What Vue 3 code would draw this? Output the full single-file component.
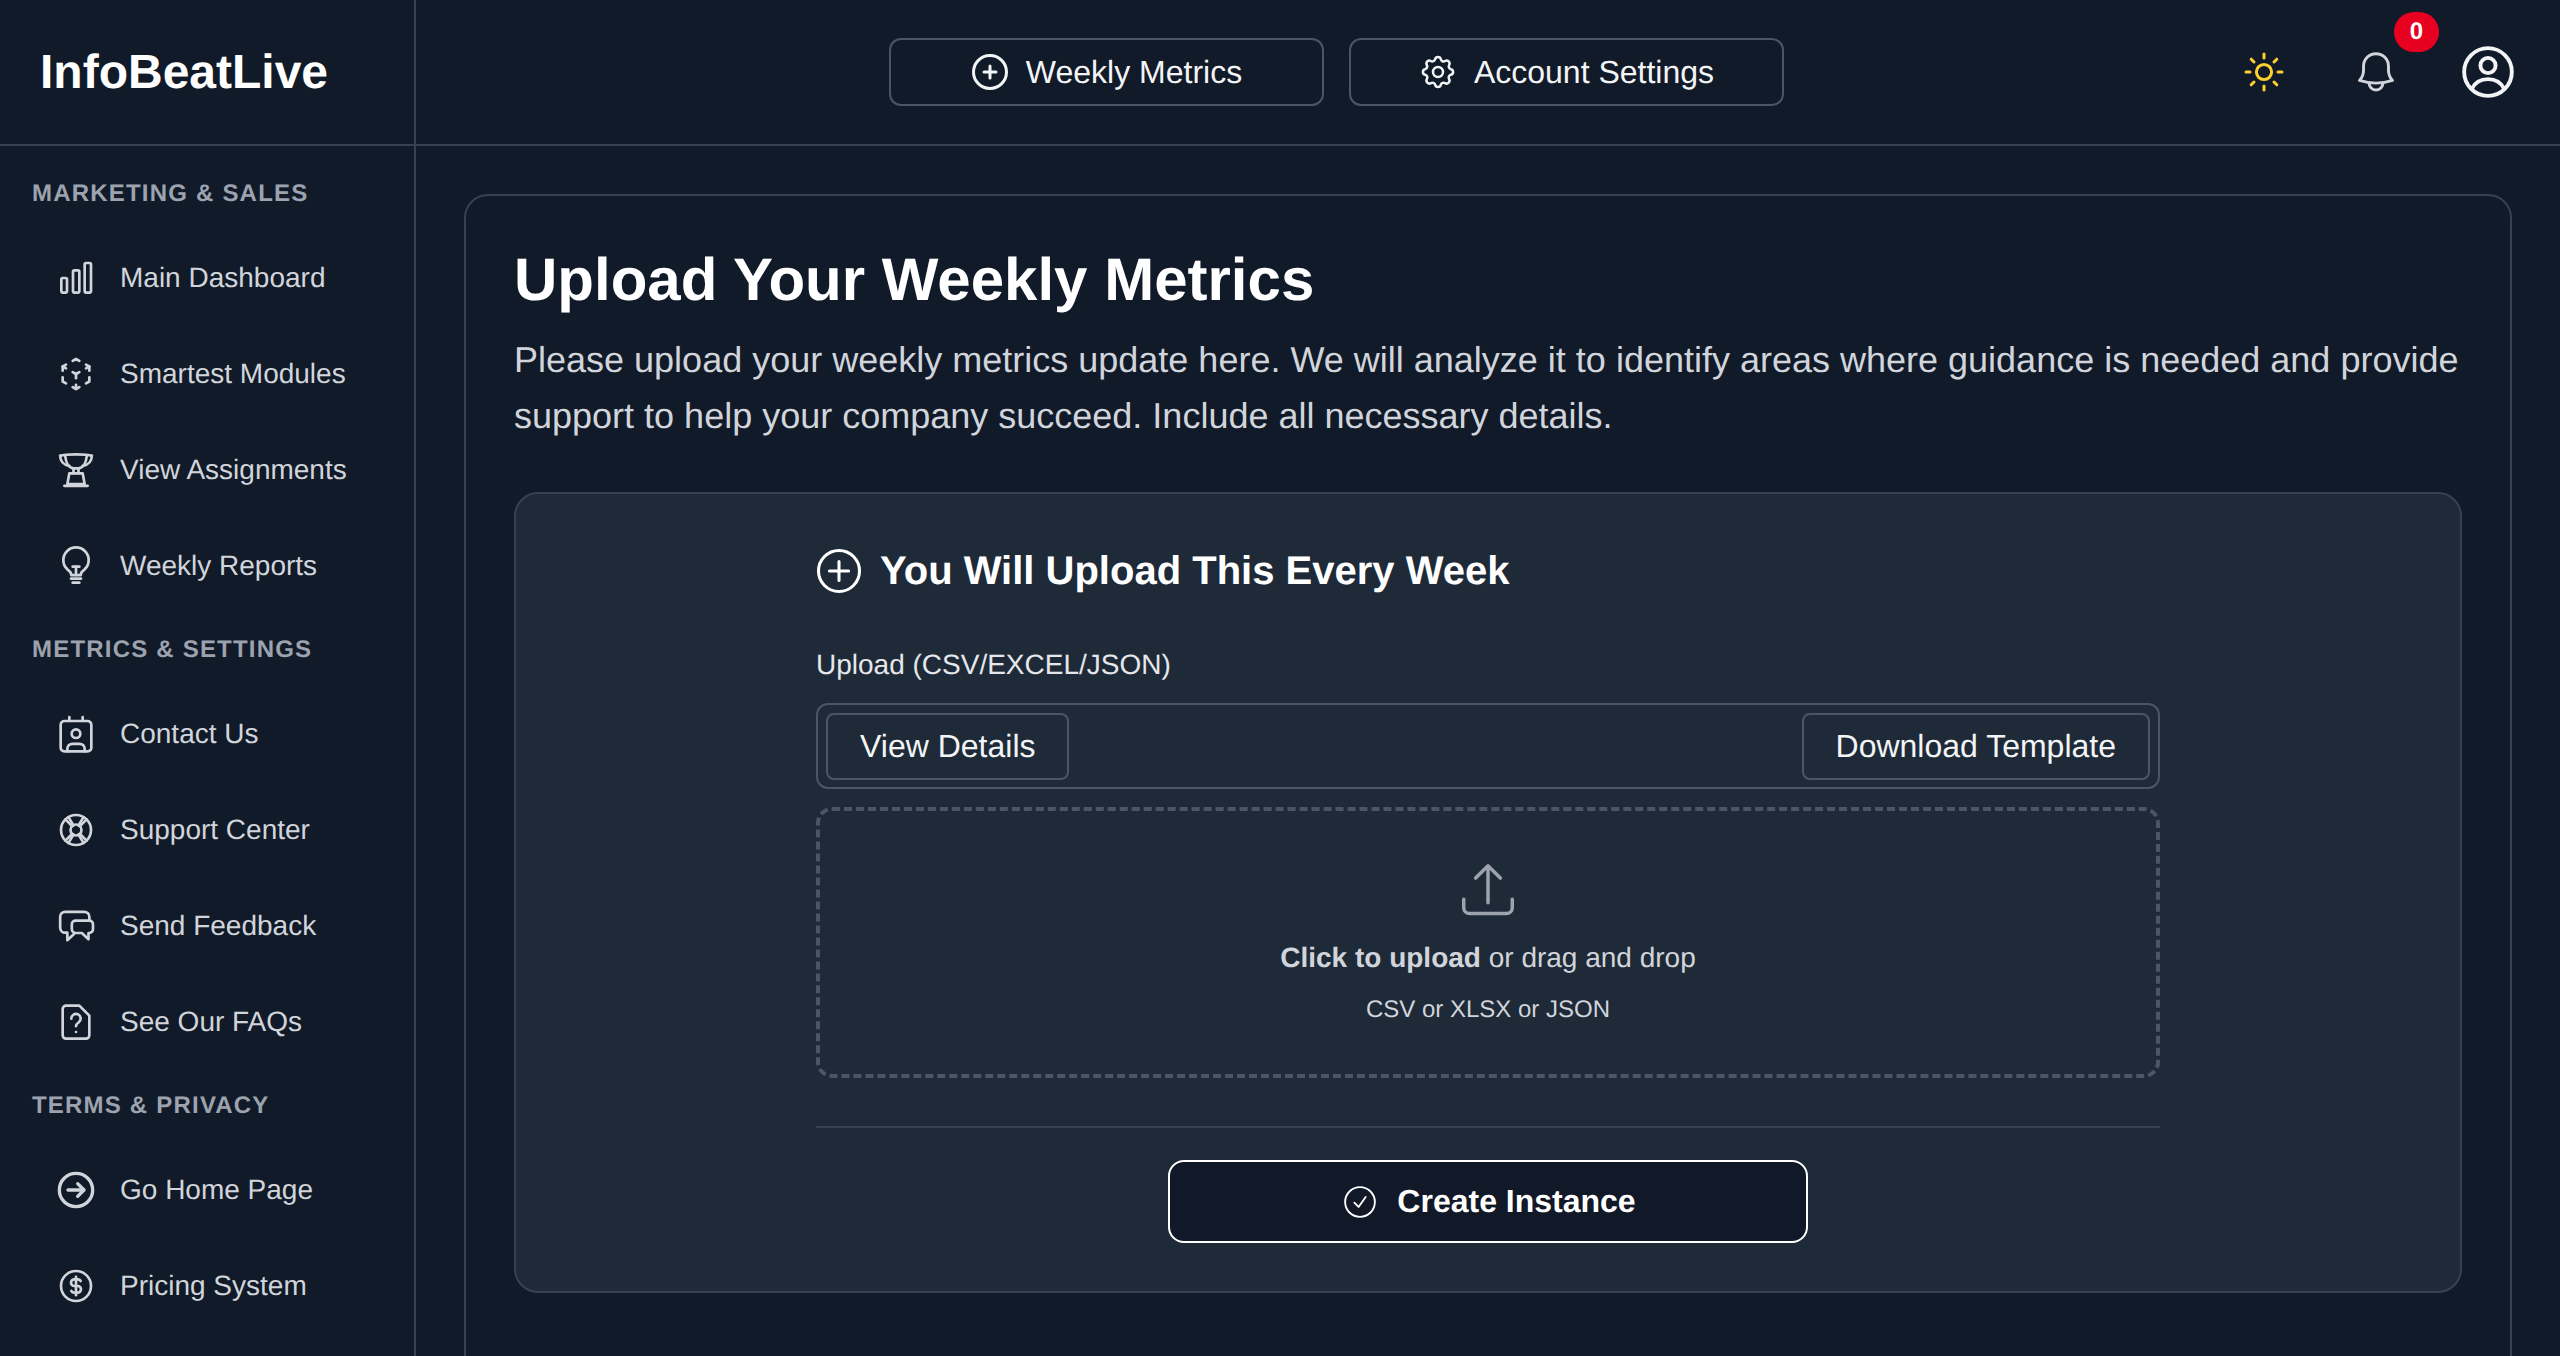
<script setup>
const navGroups = [
  {
    title: 'MARKETING & SALES',
    items: [
      { label: 'Main Dashboard', paths: ['M3.200 12.800a.8 .8 0 0 1 .8 -.8h1.800a.8 .8 0 0 1 .8 .8v7.200a.8 .8 0 0 1 -.8 .8h-1.800a.8 .8 0 0 1 -.8 -.8z', 'M10.200 8.200a.8 .8 0 0 1 .8 -.8h2.200a.8 .8 0 0 1 .8 .8v11.800a.8 .8 0 0 1 -.8 .8h-2.200a.8 .8 0 0 1 -.8 -.8z', 'M17.200 3.800a.8 .8 0 0 1 .8 -.8h2.200a.8 .8 0 0 1 .8 .8v16.200a.8 .8 0 0 1 -.8 .8h-2.200a.8 .8 0 0 1 -.8 -.8z'] },
      { label: 'Smartest Modules', paths: ['M6 17.600l-2 -1.100v-2.500', 'M4 10v-2.500l2 -1.100', 'M10 4.100l2 -1.100l2 1.100', 'M18 6.400l2 1.100v2.500', 'M20 14v2.500l-2 1.120', 'M14 19.900l-2 1.100l-2 -1.100', 'M12 12l2 -1.100', 'M18 8.600l2 -1.100', 'M12 12v2.500', 'M12 18.500v2.500', 'M12 12l-2 -1.100', 'M6 8.600l-2 -1.100'] },
      { label: 'View Assignments', paths: ['M2.500 3.500c3 -1.200 16 -1.200 19 0', 'M2.500 3.500c0 3 2 5.500 5.500 6', 'M21.500 3.500c0 3 -2 5.500 -5.500 6', 'M5.500 3.500c.5 4.500 2.500 7.300 5 7.500h3c2.500 -.2 4.500 -3 5 -7.500', 'M10.500 11v3', 'M13.500 11v3', 'M8 14h8l1.200 6.500h-10.400z', 'M5 21.500h14'] },
      { label: 'Weekly Reports', paths: ['M9.200 17.500c0 -1.500 -1 -2.500 -2.400 -3.500a7.600 7.600 0 1 1 10.400 0c-1.400 1 -2.400 2 -2.400 3.500z', 'M10 12.400h4', 'M12 12.400v5', 'M9 19.600h6', 'M10 22h4'] },
    ],
  },
  {
    title: 'METRICS & SETTINGS',
    items: [
      { label: 'Contact Us', paths: ['M5 4.200h14a2.200 2.200 0 0 1 2.200 2.200v13.800a2.200 2.200 0 0 1 -2.200 2.200h-14a2.200 2.200 0 0 1 -2.200 -2.200v-13.800a2.200 2.200 0 0 1 2.200 -2.200z', 'M8 1.800v2.400', 'M16 1.800v2.400', 'M12 9.200a2.600 2.600 0 1 1 0 5.200a2.600 2.600 0 0 1 0 -5.200z', 'M6.800 22.400v-1.500a3 3 0 0 1 3 -3h4.400a3 3 0 0 1 3 3v1.500'] },
      { label: 'Support Center', paths: ['M12 3a9 9 0 1 1 0 18a9 9 0 0 1 0 -18z', 'M12 8.700a3.300 3.300 0 1 1 0 6.600a3.300 3.300 0 0 1 0 -6.600z', 'M14.400 14.400l4 4', 'M9.600 14.400l-4 4', 'M5.600 5.600l4 4', 'M18.400 5.600l-4 4', 'M7.500 4.300l3 5', 'M16.500 4.300l-3 5', 'M7.500 19.700l3 -5', 'M16.500 19.700l-3 -5'] },
      { label: 'Send Feedback', paths: ['M20 8.500v-2a3 3 0 0 0 -3 -3h-11.500a3 3 0 0 0 -3 3v6.500a3 3 0 0 0 3 3h1.300v4.500l4 -3.700', 'M11.500 8.800h8.500a2.200 2.200 0 0 1 2.200 2.200v3a2.200 2.200 0 0 1 -2.200 2.200h-.5v3.800l-4 -3.800h-3.800a2.200 2.200 0 0 1 -2.200 -2.200v-3a2.200 2.200 0 0 1 2.200 -2.200z'] },
      { label: 'See Our FAQs', paths: ['M6 2.200h8l6 6v11.800a2 2 0 0 1 -2 2h-12a2 2 0 0 1 -2 -2v-15.800a2 2 0 0 1 2 -2z', 'M9.200 10a2.800 2.800 0 1 1 4.300 2.300c-.9 .6 -1.500 1.200 -1.500 2.200', 'M12 18v.01'] },
    ],
  },
  {
    title: 'TERMS & PRIVACY',
    items: [
      { label: 'Go Home Page', sw: 2, paths: ['M12 2a10 10 0 1 1 0 20a10 10 0 0 1 0 -20z', 'M7.200 12h9.400', 'M13 8.200l3.800 3.800l-3.800 3.800'] },
      { label: 'Pricing System', paths: ['M12 3a9 9 0 1 1 0 18a9 9 0 0 1 0 -18z', 'M14.800 9a2 2 0 0 0 -1.800 -1h-2a2 2 0 0 0 0 4h2a2 2 0 0 1 0 4h-2a2 2 0 0 1 -1.800 -1', 'M12 6.500v11'] },
    ],
  },
]

const sunRays = ['M12 3v2', 'M12 19v2', 'M3 12h2', 'M19 12h2', 'M5.600 5.600l1.400 1.400', 'M17 17l1.400 1.400', 'M5.600 18.400l1.400 -1.400', 'M17 7l1.400 -1.400']
</script>

<template>
  <div class="app">
    <aside class="sidebar">
      <div class="brand">InfoBeatLive</div>
      <nav class="nav">
        <template v-for="group in navGroups" :key="group.title">
          <div class="nav-title">{{ group.title }}</div>
          <a v-for="item in group.items" :key="item.label" class="nav-item">
            <svg class="nav-icon" viewBox="0 0 24 24" :stroke-width="item.sw || 1.6">
              <path v-for="(d, idx) in item.paths" :key="idx" :d="d" />
            </svg>
            <span>{{ item.label }}</span>
          </a>
        </template>
      </nav>
    </aside>

    <div class="content">
      <header class="topbar">
        <div class="top-actions">
          <button class="top-btn">
            <svg class="top-icon thick" viewBox="0 0 24 24">
              <circle cx="12" cy="12" r="9.900" />
              <path d="M12 8.400v7.200M8.400 12h7.200" />
            </svg>
            Weekly Metrics
          </button>
          <button class="top-btn">
            <svg class="top-icon" viewBox="0 0 24 24">
              <path d="M10.300 4.300c.4 -1.800 3 -1.800 3.400 0a1.700 1.700 0 0 0 2.600 1.100c1.500 -.9 3.300 .8 2.400 2.400a1.700 1.700 0 0 0 1 2.500c1.800 .4 1.800 3 0 3.400a1.700 1.700 0 0 0 -1 2.600c.9 1.500 -.9 3.300 -2.400 2.400a1.700 1.700 0 0 0 -2.600 1c-.4 1.800 -3 1.800 -3.400 0a1.700 1.700 0 0 0 -2.600 -1c-1.500 .9 -3.300 -.9 -2.400 -2.400a1.700 1.700 0 0 0 -1 -2.600c-1.800 -.4 -1.800 -3 0 -3.400a1.700 1.700 0 0 0 1 -2.500c-.9 -1.600 .9 -3.300 2.400 -2.400c1 .6 2.300 .1 2.600 -1.100z" />
              <circle cx="12" cy="12" r="3" />
            </svg>
            Account Settings
          </button>
        </div>
        <div class="top-right">
          <svg class="sun" viewBox="0 0 24 24">
            <circle cx="12" cy="12" r="3.800" />
            <path v-for="ray in sunRays" :key="ray" :d="ray" />
          </svg>
          <div class="bell-wrap">
            <svg class="bell" viewBox="0 0 24 24">
              <path d="M12 2a6.800 6.800 0 0 0 -6.800 6.800v2.200c0 2.500 -.7 4 -2.200 5.600c5.500 1.800 12.500 1.800 18 0c-1.500 -1.600 -2.200 -3.100 -2.200 -5.600v-2.200a6.800 6.800 0 0 0 -6.800 -6.800z" />
              <path d="M8.200 18a3.800 3.800 0 0 0 7.600 0" />
            </svg>
            <span class="badge">0</span>
          </div>
          <svg class="avatar" viewBox="0 0 24 24">
            <circle cx="12" cy="12" r="11" />
            <circle cx="12" cy="9" r="3.500" />
            <path d="M4.500 19.800c1.500 -3 4.500 -4.500 7.500 -4.500s6 1.500 7.500 4.500" />
          </svg>
        </div>
      </header>

      <main class="main">
        <section class="card">
          <h1 class="page-title">Upload Your Weekly Metrics</h1>
          <p class="page-desc">
            Please upload your weekly metrics update here. We will analyze it to identify areas where guidance is needed and provide support to help your company succeed. Include all necessary details.
          </p>

          <div class="panel">
            <div class="form">
              <h2 class="form-title">
                <svg class="form-icon" viewBox="0 0 24 24">
                  <circle cx="12" cy="12" r="10.700" />
                  <path d="M12 7v10M7 12h10" />
                </svg>
                You Will Upload This Every Week
              </h2>
              <div class="field-label">Upload (CSV/EXCEL/JSON)</div>
              <div class="toolbar">
                <button class="tool-btn">View Details</button>
                <button class="tool-btn">Download Template</button>
              </div>
              <div class="dropzone">
                <svg class="upload-icon" viewBox="0 0 24 24">
                  <path d="M12 17.500v-15.900M6.700 6.900l5.300 -5.300l5.300 5.300" />
                  <path d="M1.600 16v3.600a2.500 2.500 0 0 0 2.500 2.500h15.800a2.500 2.500 0 0 0 2.500 -2.500v-3.600" />
                </svg>
                <div class="drop-main"><strong>Click to upload</strong> or drag and drop</div>
                <div class="drop-sub">CSV or XLSX or JSON</div>
              </div>
              <div class="form-foot">
                <button class="submit-btn">
                  <svg class="submit-icon" viewBox="0 0 24 24">
                    <circle cx="12" cy="12" r="10.500" />
                    <path d="M8 12.500l3 3l5 -7" />
                  </svg>
                  Create Instance
                </button>
              </div>
            </div>
          </div>
        </section>
      </main>
    </div>
  </div>
</template>

<style>
html,
body {
  margin: 0;
  background: #111a28;
}
</style>

<style scoped>
.app {
  display: flex;
  height: 100vh;
  overflow: hidden;
  background: #111a28;
  font-family: "Liberation Sans", Arial, sans-serif;
  text-rendering: geometricPrecision;
  color: #f9fafb;
}

button {
  font-family: inherit;
  text-rendering: inherit;
  cursor: pointer;
}

svg {
  fill: none;
  stroke: currentColor;
  stroke-linecap: round;
  stroke-linejoin: round;
  flex-shrink: 0;
}

/* sidebar */
.sidebar {
  width: 414px;
  flex-shrink: 0;
  border-right: 2px solid #374151;
}

.brand {
  height: 144px;
  padding-left: 40px;
  display: flex;
  align-items: center;
  font-size: 48px;
  font-weight: 700;
  color: #fff;
  border-bottom: 2px solid #374151;
}

.nav {
  padding-top: 12px;
}

.nav-title {
  height: 72px;
  padding-left: 32px;
  display: flex;
  align-items: center;
  font-size: 24px;
  font-weight: 700;
  letter-spacing: 1.200px;
  color: #9ca3af;
}

.nav-item {
  height: 96px;
  padding-left: 56px;
  display: flex;
  align-items: center;
  gap: 24px;
  font-size: 28px;
  color: #d1d5db;
}

.nav-icon {
  width: 40px;
  height: 40px;
}

/* header */
.content {
  flex: 1;
  min-width: 0;
  display: flex;
  flex-direction: column;
}

.topbar {
  height: 144px;
  flex-shrink: 0;
  display: flex;
  align-items: center;
  border-bottom: 2px solid #374151;
}

.top-actions {
  flex: 1;
  display: flex;
  justify-content: center;
  gap: 25px;
}

.top-btn {
  width: 435px;
  height: 68px;
  display: flex;
  align-items: center;
  justify-content: center;
  gap: 16px;
  background: transparent;
  border: 2px solid #4b5563;
  border-radius: 12px;
  font-size: 32px;
  color: #f3f4f6;
}

.top-icon {
  width: 40px;
  height: 40px;
  stroke-width: 1.500;
}

.top-icon.thick {
  stroke-width: 1.800;
}

.top-right {
  width: 304px;
  box-sizing: border-box;
  display: flex;
  align-items: center;
}

.sun {
  width: 48px;
  height: 48px;
  margin-left: -16px;
  stroke-width: 1.500;
  color: #fbd130;
}

.bell-wrap {
  position: relative;
  margin-left: 66px;
  display: flex;
}

.bell {
  width: 44px;
  height: 44px;
  stroke-width: 1.600;
  color: #d1d5db;
}

.badge {
  position: absolute;
  left: 40px;
  top: -38px;
  width: 45px;
  height: 40px;
  border-radius: 20px;
  background: #e7001f;
  color: #fff;
  font-size: 24px;
  font-weight: 700;
  display: flex;
  align-items: center;
  justify-content: center;
}

.avatar {
  width: 52px;
  height: 52px;
  margin-left: 64px;
  stroke-width: 1.800;
  color: #f3f4f6;
}

/* main */
.main {
  flex: 1;
  min-height: 0;
  padding: 48px 48px 0;
}

.card {
  box-sizing: border-box;
  min-height: 1300px;
  padding: 48px;
  border: 2px solid #374151;
  border-radius: 24px;
}

.page-title {
  margin: 0;
  font-size: 60px;
  line-height: 72px;
  font-weight: 700;
  color: #fff;
}

.page-desc {
  margin: 16px 0 0;
  font-size: 36px;
  line-height: 56px;
  color: #d1d5db;
}

.panel {
  margin-top: 48px;
  padding: 54px 0 48px;
  display: flex;
  justify-content: center;
  background: #1e2a38;
  border: 2px solid #374151;
  border-radius: 24px;
}

.form {
  width: 1344px;
}

.form-title {
  margin: 0;
  display: flex;
  align-items: center;
  gap: 18px;
  font-size: 40px;
  line-height: 44px;
  font-weight: 700;
  color: #fff;
}

.form-icon {
  width: 46px;
  height: 46px;
  stroke-width: 1.600;
}

.field-label {
  margin-top: 51px;
  font-size: 28px;
  line-height: 40px;
  color: #e5e7eb;
}

.toolbar {
  margin-top: 18px;
  height: 86px;
  box-sizing: border-box;
  padding: 0 8px;
  display: flex;
  align-items: center;
  justify-content: space-between;
  border: 2px solid #4b5563;
  border-radius: 12px;
}

.tool-btn {
  height: 67px;
  padding: 0 32px;
  background: transparent;
  border: 2px solid #4b5563;
  border-radius: 8px;
  font-size: 32px;
  color: #f3f4f6;
}

.dropzone {
  margin-top: 18px;
  height: 271px;
  box-sizing: border-box;
  display: flex;
  flex-direction: column;
  align-items: center;
  border: 4px dashed #4b5563;
  border-radius: 16px;
}

.upload-icon {
  width: 56px;
  height: 56px;
  margin-top: 51px;
  stroke-width: 1.500;
  color: #9ca3af;
}

.drop-main {
  margin-top: 20px;
  font-size: 28px;
  line-height: 40px;
  color: #d1d5db;
}

.drop-sub {
  margin-top: 14px;
  font-size: 24px;
  line-height: 36px;
  color: #d1d5db;
}

.form-foot {
  margin-top: 48px;
  padding-top: 32px;
  display: flex;
  justify-content: center;
  border-top: 2px solid #374151;
}

.submit-btn {
  width: 640px;
  height: 83px;
  padding: 0 0 0 3px;
  display: flex;
  align-items: center;
  justify-content: center;
  gap: 20px;
  background: #111827;
  border: 2px solid #fff;
  border-radius: 16px;
  font-size: 32px;
  font-weight: 700;
  color: #fff;
}

.submit-icon {
  width: 34px;
  height: 34px;
  stroke-width: 1.300;
}
</style>
